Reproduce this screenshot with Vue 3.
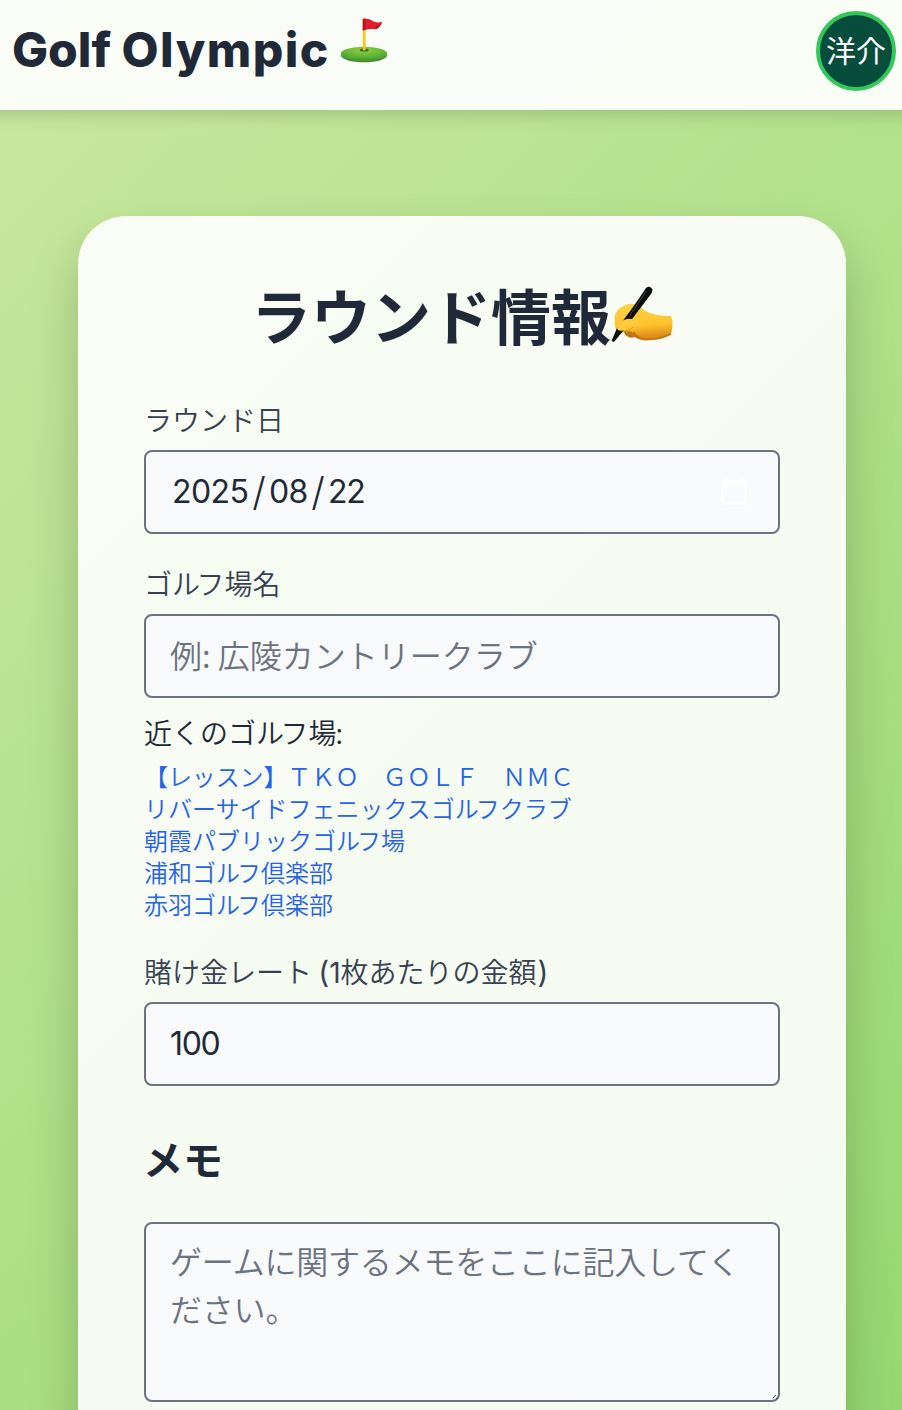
<script setup>
const clubs = [
  ['【レッスン】ＴＫＯ　ＧＯＬＦ　ＮＭＣ'],
  ['リバーサイドフェニックスゴ', 'ル', 'フクラブ'],
  ['朝霞パブリックゴ', 'ル', 'フ場'],
  ['浦和ゴ', 'ル', 'フ倶楽部'],
  ['赤羽ゴ', 'ル', 'フ倶楽部'],
]
</script>

<template>
  <div class="page">
    <header class="bar">
      <h1 class="brand">
        <span class="brand-name">Golf <span class="wide">Olympic</span></span>
        <svg class="flag" viewBox="0 0 48 46" aria-hidden="true">
          <defs>
            <radialGradient id="grass" cx=".5" cy=".25" r=".7">
              <stop offset="0" stop-color="#8fcf45" />
              <stop offset=".6" stop-color="#65b534" />
              <stop offset="1" stop-color="#469b36" />
            </radialGradient>
          </defs>
          <ellipse cx="24" cy="38" rx="23.3" ry="7.3" fill="#4b8a34" />
          <ellipse cx="24" cy="36.8" rx="23.2" ry="7" fill="url(#grass)" />
          <ellipse cx="24.2" cy="33" rx="4.5" ry="1.6" fill="#3c641d" />
          <path d="M22.8 1.5q1.5-1.5 2.8 0V33q-1.4 1.2-2.8 0z" fill="#f7c71c" />
          <path d="M22.800 2c5-1 8 .5 11 2.500q4 1.700 8.500.3-1.700 5.500-6.500 7.500c-4-.5-8-.1-13 1.200z" fill="#e61c2d" />
          <path d="M22.800 2l2.500-.3v11.300l-2.500.5zM36 9q3-1 5.500-3.500-2 5.500-6 7z" fill="#aa1725" />
        </svg>
      </h1>
      <div class="avatar"><span>洋介</span></div>
    </header>

    <main class="card">
      <h2 class="title">
        <span class="title-text">ラウンド情報</span>
        <svg class="hand" viewBox="0 0 62 60" aria-hidden="true">
          <defs>
            <linearGradient id="skin" x1="0" y1="0" x2=".15" y2="1">
              <stop offset="0" stop-color="#ffd64a" />
              <stop offset=".7" stop-color="#fdc32d" />
              <stop offset="1" stop-color="#e0911b" />
            </linearGradient>
          </defs>
          <path d="M12 43c2 8 7 10 12 8 4 3 9 4 16 3 7 0 14-2 20-5V35L40 34z" fill="#c47a17" />
          <path d="M4 40C3 31 3 27 9 22c6-4 9-5 13-4 5 0 8 2 11 6 7 4 14 6 27 6 2 4 2 13 0 17-10 4-17 5-25 5-8-1-12-6-17-7l-8 2q-5-1-6-7z" fill="url(#skin)" />
          <path d="M18 46q1 4 3 5M23 46q1 4 4 6M14 45q0 3 2 4" fill="none" stroke="#b9700f" stroke-width="1.300" />
          <path d="M35 2q4-3 6.500 1.500 0 3-3 6.500L12 45 3 56l-2.500-1L6 42Q20 25 35 2z" fill="#0d0d0d" />
          <path d="M35.500 5L19 29" stroke="#444" stroke-width="1" />
          <path d="M6 42.500q1-7 7-8.500 5-2 10-.5 5-1 8 1-5 5-9 6-5 4-10 4-5 1-6-2z" fill="#fdca39" />
          <path d="M13 45q5 0 9-4" fill="none" stroke="#dc951e" stroke-width="1" />
        </svg>
      </h2>

      <section class="field">
        <label class="label">ラウンド日</label>
        <div class="control date">
          <span class="date-text"><span class="year">2025</span><i>/</i><span class="month">08</span><i>/</i><span class="day">22</span></span>
          <svg class="calendar" viewBox="0 0 28 30" aria-hidden="true">
            <path fill-rule="evenodd" d="M4 0h4v3h12V0h4v3q3 0 3 3v19q0 3-3 3H4q-3 0-3-3V6q0-3 3-3zM4 10v15h20V10z" fill="#fff" />
          </svg>
        </div>
      </section>

      <section class="field">
        <label class="label">ゴ<span class="tight">ル</span>フ場名</label>
        <div class="control hint"><span class="example">例: 広陵カントリークラブ</span></div>
        <p class="near">近くのゴ<span class="tight">ル</span>フ場<span class="colon">:</span></p>
        <ul class="clubs">
          <li v-for="(parts, i) in clubs" :key="i"><span v-for="(part, j) in parts" :key="j" :class="{ tight: j === 1 }">{{ part }}</span></li>
        </ul>
      </section>

      <section class="field">
        <label class="label">賭け金レート <span class="latin open">(</span><span class="latin one">1</span>枚あたりの金額<span class="latin close">)</span></label>
        <div class="control"><span class="amount">100</span></div>
      </section>

      <h3 class="memo-title">メモ</h3>
      <div class="memo">ゲームに関するメモをここに記入してください。
        <svg class="grip" viewBox="0 0 6 6" aria-hidden="true"><path d="M1 4L4 1M4 5l1-1" stroke="#444" /></svg>
      </div>
    </main>
  </div>
</template>

<style>
body { margin: 0; overflow: hidden; }
</style>

<style scoped>
* { box-sizing: border-box; }
.page {
  height: 1410px;
  overflow: hidden;
  background: linear-gradient(135deg, #c9e8a0 0%, #b0e189 50%, #96d870 100%);
  font-family: "Noto Sans CJK JP", sans-serif;
  font-weight: 350;
  color: #1f2937;
}
.bar {
  height: 110px;
  padding: 0 6px 8px 12px;
  display: flex;
  align-items: center;
  justify-content: space-between;
  background: rgba(255, 255, 255, .92);
  box-shadow: 0 -12px 16px 16px rgba(0, 0, 0, .17);
}
.brand { margin: 0; display: flex; align-items: center; }
.brand-name {
  font: 800 48px/60px Inter, sans-serif;
  white-space: nowrap;
  width: 328px;
  margin-top: -2px;
}
.wide { letter-spacing: 1.4px; }
.flag { width: 48px; height: 46px; margin-top: -22px; }
.avatar {
  width: 80px;
  height: 80px;
  border: 4px solid #34c759;
  border-radius: 50%;
  background: #064e3b;
  color: #fff;
  display: flex;
  align-items: center;
  justify-content: center;
  font-size: 30px;
  line-height: 1;
  font-weight: 400;
  padding-bottom: 5px;
}
.card {
  width: 768px;
  height: 1300px;
  margin: 106px 0 0 78px;
  padding: 64px 66px;
  border-radius: 48px;
  background: rgba(255, 255, 255, .9);
  box-shadow: 0 25px 50px rgba(0, 0, 0, .2);
}
.title {
  margin: 0 0 47px;
  height: 72px;
  display: flex;
  justify-content: center;
  align-items: center;
  font-size: 60px;
  line-height: 72px;
  font-weight: 700;
  white-space: nowrap;
}
.title-text { padding-bottom: 5px; }
.hand { width: 62px; height: 60px; }
.field { margin-bottom: 29px; }
.label {
  display: block;
  height: 40px;
  margin-bottom: 11px;
  line-height: 40px;
  font-size: 28px;
  color: #374151;
  white-space: nowrap;
}
.tight { letter-spacing: -.13em; }
.colon { margin-left: -1px; }
.latin { font-family: Inter, sans-serif; font-weight: 400; font-size: 30px; line-height: 1; }
.open { margin-left: 0; }
.one { font-size: 28px; }
.close { margin-left: 1px; }
.control {
  height: 84px;
  border: 2px solid #6b7280;
  border-radius: 8px;
  background: #f9fafb;
  padding: 0 24px;
  display: flex;
  align-items: center;
  font-size: 32px;
  white-space: nowrap;
}
.example { padding-bottom: 5px; }
.date { justify-content: space-between; padding: 0 30px 0 26px; }
.date-text, .amount { font-family: Inter, sans-serif; font-weight: 400; padding-bottom: 1px; }
.date-text { display: flex; align-items: center; }
.date-text i { width: 20px; font-style: normal; font-weight: 300; font-size: 39px; line-height: 40px; text-align: center; }
.year { width: 77px; letter-spacing: -.6px; }
.month { width: 39px; letter-spacing: -.6px; }
.day { letter-spacing: -1.2px; }
.amount { letter-spacing: -1.3px; }
.calendar { width: 28px; height: 30px; }
.hint, .memo { color: #6b7280; }
.near { margin: 14px 0 0; height: 40px; line-height: 40px; font-size: 28px; }
.clubs {
  list-style: none;
  margin: 8px 0 31px;
  padding: 0;
  font-size: 24px;
  line-height: 32px;
  color: #2563eb;
  white-space: nowrap;
}
.clubs li:first-child { letter-spacing: -.12px; }
.memo-title { margin: 40px 0 0 -1px; height: 64px; font-size: 40px; line-height: 64px; font-weight: 700; }
.memo {
  position: relative;
  height: 180px;
  margin-top: 32px;
  padding: 12px 24px;
  border: 2px solid #6b7280;
  border-radius: 8px;
  background: #f9fafb;
  font-size: 32px;
  line-height: 48px;
  letter-spacing: -.2px;
}
.grip { position: absolute; right: 0; bottom: 0; width: 6px; height: 6px; }
</style>
